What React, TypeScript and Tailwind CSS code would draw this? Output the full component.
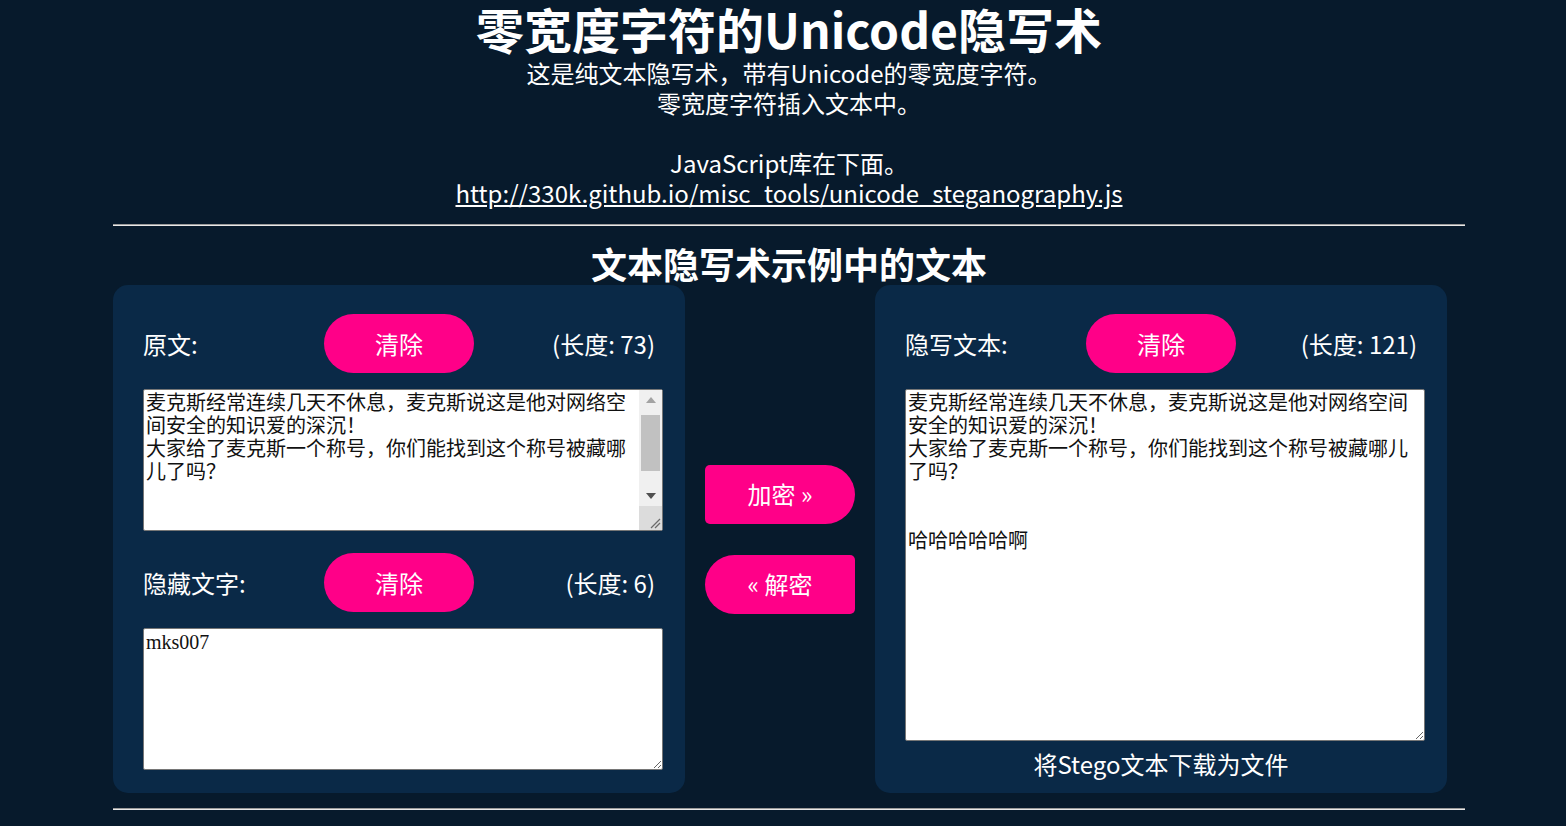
import React from 'react';

const original = '麦克斯经常连续几天不休息，麦克斯说这是他对网络空间安全的知识爱的深沉！\n大家给了麦克斯一个称号，你们能找到这个称号被藏哪儿了吗？\n\n\n\n';
const stego = '麦克斯经常连续几天不休息，麦克斯说这是他对网络空间安全的知识爱的深沉！\n大家给了麦克斯一个称号，你们能找到这个称号被藏哪儿了吗？\n\n\n哈哈哈哈哈啊';

function ClearButton() {
	return (
		<button className="w-[150px] h-[59px] rounded-full bg-[#ff0088] text-white text-[24px] leading-[30px] justify-self-center">
			清除
		</button>
	);
}

// ラベル / 清除ボタン / 長さ
function FieldRow({ label, length }: { label: string; length: number }) {
	return (
		<div className="grid grid-cols-3 items-center h-[59px]">
			<div className="text-[24px] leading-[30px] text-white">{label}</div>
			<ClearButton />
			<div className="text-[24px] leading-[30px] text-white text-right">(长度: {length})</div>
		</div>
	);
}

const areaClass =
	"block w-[520px] border border-[#767676] rounded-[2px] bg-white px-[2px] py-[2px] text-[20px] leading-[23px] text-[#111] font-['Liberation_Serif','Noto_Sans_CJK_SC',serif]";

// スクロールバー（見た目だけ）
function FakeScrollbar() {
	return (
		<div className="pointer-events-none absolute right-[1px] top-[1px] bottom-[1px] w-[23px] bg-[#f0f0f0] flex flex-col">
			<div className="h-[20px] flex items-center justify-center">
				<span className="w-0 h-0 border-x-[5px] border-x-transparent border-b-[6px] border-b-[#a3a3a3]" />
			</div>
			<div className="h-[5px]" />
			<div className="h-[56px] mx-[2px] bg-[#c1c1c1]" />
			<div className="flex-1" />
			<div className="h-[20px] flex items-center justify-center">
				<span className="w-0 h-0 border-x-[5px] border-x-transparent border-t-[6px] border-t-[#505050]" />
			</div>
			<div className="h-[24px] bg-[#dcdcdc] flex items-end justify-end">
				<svg width="12" height="12" viewBox="0 0 12 12" className="mb-[1px] mr-[1px]">
					<line x1="11" y1="2" x2="2" y2="11" stroke="#6b6b6b" strokeWidth="1.2" />
					<line x1="11" y1="6" x2="6" y2="11" stroke="#6b6b6b" strokeWidth="1.2" />
				</svg>
			</div>
		</div>
	);
}

export default function App() {
	return (
		<div className="min-h-screen bg-[#071a2c] text-white font-['Noto_Sans_CJK_SC',sans-serif] overflow-hidden">
			<div className="ml-[113px] w-[1352px]">
				{/* タイトル */}
				<h1 className="-mt-[2px] text-center text-[48px] leading-[60px] font-bold">零宽度字符的Unicode隐写术</h1>
				<div className="text-center text-[24px] leading-[30px]">
					<p>这是纯文本隐写术，带有Unicode的零宽度字符。</p>
					<p>零宽度字符插入文本中。</p>
					<p>&nbsp;</p>
					<p>JavaScript库在下面。</p>
					<a href="#" className="underline">http://330k.github.io/misc_tools/unicode_steganography.js</a>
				</div>
				<hr className="mt-[16px] border-0 border-t border-b border-t-[#9a9a9a] border-b-[#e8e8e8]" />
				<h2 className="mt-[15px] text-center text-[36px] leading-[44px] font-bold">文本隐写术示例中的文本</h2>

				{/* メイン */}
				<div className="flex">
					<div className="w-[572px] bg-[#0a2947] rounded-[15px] px-[30px] pt-[29px] pb-[23px]">
						<FieldRow label="原文:" length={73} />
						<div className="relative mt-[16px] w-[520px]">
							<textarea className={`${areaClass} h-[142px] pr-[25px] overflow-hidden resize-none`} defaultValue={original} />
							<FakeScrollbar />
						</div>
						<div className="mt-[22px]">
							<FieldRow label="隐藏文字:" length={6} />
						</div>
						<textarea className={`${areaClass} mt-[16px] h-[142px]`} defaultValue="mks007" />
					</div>

					<div className="w-[190px] flex flex-col items-center justify-center gap-[31px]">
						<button className="w-[150px] h-[59px] bg-[#ff0088] rounded-l-[5px] rounded-r-[30px] text-[24px] leading-[30px] text-white">
							加密 »
						</button>
						<button className="w-[150px] h-[59px] bg-[#ff0088] rounded-r-[5px] rounded-l-[30px] text-[24px] leading-[30px] text-white">
							« 解密
						</button>
					</div>

					<div className="w-[572px] bg-[#0a2947] rounded-[15px] px-[30px] pt-[29px] pb-[14px]">
						<FieldRow label="隐写文本:" length={121} />
						<textarea className={`${areaClass} mt-[16px] h-[352px]`} defaultValue={stego} />
						<div className="mt-[8px] w-[512px] text-center text-[24px] leading-[30px]">
							<a href="#">将Stego文本下载为文件</a>
						</div>
					</div>
				</div>

				<hr className="mt-[15px] border-0 border-t border-b border-t-[#9a9a9a] border-b-[#e8e8e8]" />
			</div>
		</div>
	);
}
